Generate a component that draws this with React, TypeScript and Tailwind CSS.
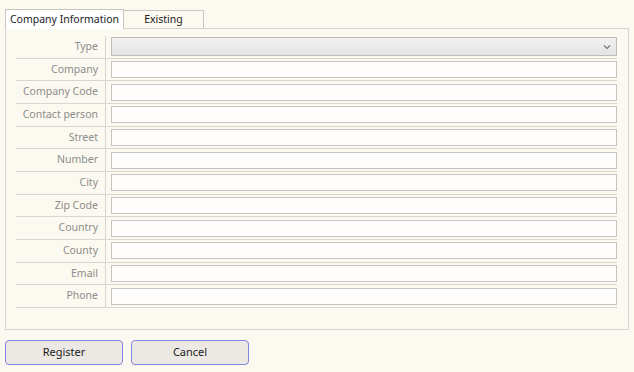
import React from 'react';

const fields = [
  'Type',
  'Company',
  'Company Code',
  'Contact person',
  'Street',
  'Number',
  'City',
  'Zip Code',
  'Country',
  'County',
  'Email',
  'Phone',
];

const App: React.FC = () => {
  return (
    <div
      className="w-[634px] h-[372px] bg-[#fcf9f0] flex flex-col px-[5px] pt-[8px] text-[10.5px] text-[#1a1a1a] whitespace-nowrap"
      style={{ fontFamily: '"Noto Sans", "Open Sans", sans-serif' }}
    >
      {/* tabs */}
      <div className="flex items-end h-[20px]">
        <div className="h-[20px] w-[119px] bg-white border border-b-0 border-[#c9c6bf] flex items-center justify-center relative z-10 -mb-px">
          Company Information
        </div>
        <div className="h-[18px] w-[80px] bg-[#fcf9f0] border border-l-0 border-b-0 border-[#c9c6bf] flex items-center justify-center">
          Existing
        </div>
      </div>

      {/* panel */}
      <div className="w-[624px] h-[302px] border border-[#d8d5ce] pt-[7px] px-[10px]">
        <div className="flex flex-col w-[601px]">
          {fields.map((f, i) => (
            <div key={f} className="flex h-[22.67px] border-b border-[#d8d6cf]">
              <div className="w-[90px] border-r border-[#d8d6cf] flex items-center justify-end pr-[7px] text-[#8c8c8c]">
                {f}
              </div>
              <div className="flex-1 flex items-center pl-[5px]">
                {i === 0 ? (
                  <div className="w-full h-[19px] border border-[#bdbdbd] bg-gradient-to-b from-[#f1f1f1] to-[#e4e4e4] flex items-center justify-end pr-[5px]">
                    <svg width="8" height="6" viewBox="0 0 8 6" fill="none">
                      <path d="M1 1.5 L4 4.5 L7 1.5" stroke="#777" strokeWidth="1.2" />
                    </svg>
                  </div>
                ) : (
                  <div className="w-full h-[17px] border border-[#c4c4c4] bg-[#fffefc]" />
                )}
              </div>
            </div>
          ))}
        </div>
      </div>

      {/* buttons */}
      <div className="flex gap-[8px] mt-[10px]">
        <button className="w-[118px] h-[25px] rounded-[4px] border border-[#8585e0] bg-[#ece9e5] text-[11px] text-[#1a1a1a]">
          Register
        </button>
        <button className="w-[118px] h-[25px] rounded-[4px] border border-[#8585e0] bg-[#ece9e5] text-[11px] text-[#1a1a1a]">
          Cancel
        </button>
      </div>
    </div>
  );
};

export default App;
